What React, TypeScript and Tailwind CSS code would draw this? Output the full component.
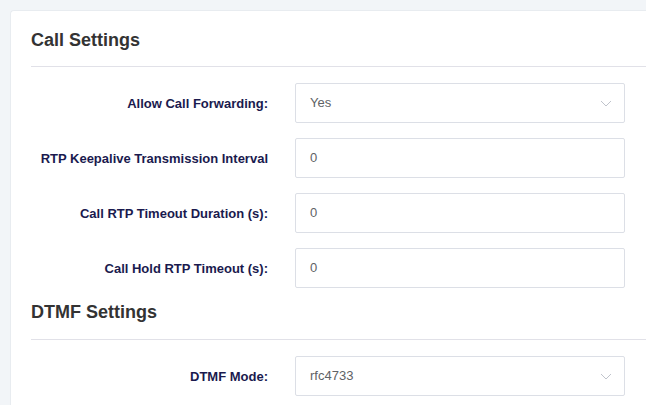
import React from "react";

const Chevron = () => (
  <svg width="12" height="7" viewBox="0 0 12 7" fill="none" className="shrink-0">
    <path d="M1 1 L6 6 L11 1" stroke="#c0c4cc" strokeWidth="1" />
  </svg>
);

const Row = ({ label, value, select }: { label: string; value: string; select?: boolean }) => (
  <div className="flex items-center h-10">
    <div className="w-[237px] shrink-0 text-right text-[13px] font-bold text-[#1a1a4e] leading-none whitespace-nowrap">{label}</div>
    <div className="ml-[27px] w-[330px] h-10 border border-[#dcdfe6] rounded-[2px] bg-white flex items-center justify-between pl-[14px] pr-[12px] text-[13px] text-[#606266]">
      <span>{value}</span>
      {select && <Chevron />}
    </div>
  </div>
);

export default function App() {
  return (
    <div className="min-h-[405px] bg-[#f2f5f8] pt-[10px] pl-[10px] overflow-hidden" style={{ fontFamily: '"Liberation Sans", Arial, sans-serif' }}>
      <div className="bg-white rounded-tl-[4px] border-t border-l border-[#e8ecf0] pl-[20px] pt-[17px] pb-[20px] min-h-[395px]">
        <div className="h-6 flex items-center text-[18px] font-bold text-[#333] leading-none">Call Settings</div>
        <div className="mt-[14px] border-t border-[#e1e1e8]" />
        <div className="mt-[16px] flex flex-col gap-[15px]">
          <Row label="Allow Call Forwarding:" value="Yes" select />
          <Row label="RTP Keepalive Transmission Interval" value="0" />
          <Row label="Call RTP Timeout Duration (s):" value="0" />
          <Row label="Call Hold RTP Timeout (s):" value="0" />
        </div>
        <div className="mt-[12px] h-6 flex items-center text-[18px] font-bold text-[#333] leading-none">DTMF Settings</div>
        <div className="mt-[15px] border-t border-[#e1e1e8]" />
        <div className="mt-[16px] flex flex-col gap-[15px]">
          <Row label="DTMF Mode:" value="rfc4733" select />
        </div>
      </div>
    </div>
  );
}
